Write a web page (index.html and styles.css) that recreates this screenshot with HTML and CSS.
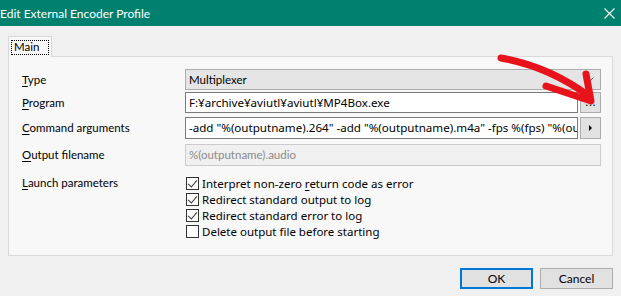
FILE: index.html
```html
<!DOCTYPE html>
<html lang="en">
<head>
    <meta charset="UTF-8">
    <title>Edit External Encoder Profile</title>
    <link rel="stylesheet" href="styles.css">
</head>
<body>
    <div class="window">
        <header class="titlebar">
            <span class="title">Edit External Encoder Profile</span>
            <svg class="close" width="11" height="11" viewBox="0 0 11 11">
                <path d="M0.5 0.5 L10.5 10.5 M10.5 0.5 L0.5 10.5" stroke="#fff" stroke-width="1.1" fill="none"/>
            </svg>
        </header>

        <div class="body">
            <div class="tabs">
                <div class="tab active"><span class="focus">Main</span></div>
            </div>

            <div class="page">
                <div class="form">
                    <label class="label"><u>T</u>ype</label>
                    <div class="combo">
                        <span>Multiplexer</span>
                        <svg class="chevron" width="8" height="5" viewBox="0 0 8 5">
                            <path d="M0.5 0.5 L4 4 L7.5 0.5" stroke="#606060" fill="none"/>
                        </svg>
                    </div>

                    <label class="label"><u>P</u>rogram</label>
                    <div class="field-row">
                        <div class="input">F:¥archive¥aviutl¥aviutl¥MP4Box.exe</div>
                        <button class="small-btn dots">...</button>
                    </div>

                    <label class="label tall"><u>C</u>ommand arguments</label>
                    <div class="field-row tall">
                        <div class="input">-add "%(outputname).264" -add "%(outputname).m4a" -fps %(fps) "%(outputname).mp4"</div>
                        <button class="small-btn">
                            <svg width="3" height="6" viewBox="0 0 3 6"><path d="M0 0 L3 3 L0 6 Z" fill="#000"/></svg>
                        </button>
                    </div>

                    <label class="label tall"><u>O</u>utput filename</label>
                    <div class="input disabled">%(outputname).audio</div>

                    <label class="label launch"><u>L</u>aunch parameters</label>
                    <div class="checks">
                        <div class="check"><span class="box on"></span><span>Interpret non-zero <u>r</u>eturn code as error</span></div>
                        <div class="check"><span class="box on"></span><span>Redirect standard output to log</span></div>
                        <div class="check"><span class="box on"></span><span>Redirect standard error to log</span></div>
                        <div class="check"><span class="box"></span><span>Delete output file before starting</span></div>
                    </div>
                </div>
            </div>

            <div class="actions">
                <button class="btn default">OK</button>
                <button class="btn">Cancel</button>
            </div>
        </div>

        <!-- hand drawn marker over the browse button -->
        <svg class="marker" width="621" height="296" viewBox="0 0 621 296">
            <path d="M501 58 Q548 66 589 96" stroke="#e8121b" stroke-width="7" stroke-linecap="round" fill="none"/>
            <path d="M586 74 L591 101 L546 86" stroke="#e8121b" stroke-width="7" stroke-linecap="round" stroke-linejoin="round" fill="none"/>
        </svg>
    </div>
</body>
</html>
```

FILE: styles.css
```css
:root {
    --title-color: #00806f;
    --window-bg: #f0f0f0;
    --page-bg: #f8f8f8;
    --page-border: #d9d9d9;
    --field-border: #7a7a7a;
    --btn-bg: #e1e1e1;
    --btn-border: #adadad;
    --accent: #0078d7;
    --text: #000000;
    --text-disabled: #8a8a8a;
}

* {
    margin: 0;
    padding: 0;
    box-sizing: border-box;
}

body {
    width: 621px;
    height: 296px;
    overflow: hidden;
    background: var(--window-bg);
    font-family: 'Lato', 'Noto Sans', sans-serif;
    font-size: 11.5px;
    color: var(--text);
}

.window {
    position: relative;
    height: 100%;
}

.titlebar {
    height: 26px;
    background: var(--title-color);
    color: #fff;
    display: flex;
    align-items: center;
    justify-content: space-between;
    padding-right: 6px;
}

.title {
    font-size: 12px;
}

.close {
    display: block;
}

.body {
    padding: 10px 8px 0 8px;
}

.tabs {
    display: flex;
    height: 21px;
    position: relative;
    z-index: 1;
}

.tab {
    width: 44px;
    height: 21px;
    border: 1px solid var(--page-border);
    border-bottom: none;
    background: var(--page-bg);
    padding: 3px 2px 1px 2px;
}

.focus {
    display: block;
    height: 15px;
    line-height: 14px;
    padding-left: 3px;
    outline: 1px dotted #000;
    outline-offset: -1px;
}

.page {
    margin-top: -1px;
    height: 200px;
    border: 1px solid var(--page-border);
    background: var(--page-bg);
    padding: 12px 11px 0 13px;
}

/* rows include the gap above each control */
.form {
    display: grid;
    grid-template-columns: 163px minmax(0, 1fr);
    grid-template-rows: 21px 23px 26px 27px auto;
}

.form > * {
    align-self: end;
}

.label {
    line-height: 21px;
}

.label.tall {
    line-height: 22px;
}

.label u,
.check u {
    text-decoration-thickness: 1px;
    text-underline-offset: 2px;
}

.combo {
    height: 21px;
    background: #e5e5e5;
    border: 1px solid #adadad;
    display: flex;
    align-items: center;
    justify-content: space-between;
    padding: 0 6px 0 3px;
}

.field-row {
    display: flex;
    gap: 2px;
    height: 21px;
    min-width: 0;
}

.field-row.tall {
    height: 22px;
}

.input {
    flex: 1;
    min-width: 0;
    height: 100%;
    background: #fff;
    border: 1px solid var(--field-border);
    padding: 0 3px;
    line-height: 19px;
    white-space: nowrap;
    overflow: hidden;
    font-family: 'Noto Sans', 'Noto Sans CJK JP', sans-serif;
    font-size: 11.6px;
}

.input.disabled {
    height: 22px;
    background: #f0f0f0;
    border-color: #cccccc;
    color: var(--text-disabled);
    line-height: 20px;
    font-family: 'Lato', 'Noto Sans', sans-serif;
    font-size: 11.5px;
}

.small-btn {
    flex: none;
    width: 21px;
    height: 100%;
    background: var(--btn-bg);
    border: 1px solid var(--btn-border);
    font-family: inherit;
    font-size: 11px;
    line-height: 1;
    display: flex;
    align-items: center;
    justify-content: center;
}

.small-btn.dots {
    align-items: flex-end;
    padding-bottom: 5px;
    letter-spacing: 1px;
    padding-left: 1px;
}

.launch {
    align-self: start;
    margin-top: 9px;
    line-height: 16px;
}

.checks {
    align-self: start;
    margin-top: 9px;
    display: flex;
    flex-direction: column;
}

.check {
    display: flex;
    align-items: center;
    gap: 3px;
    height: 16px;
    margin-left: 1px;
    font-family: 'Noto Sans', sans-serif;
    font-size: 11.5px;
}

.box {
    flex: none;
    width: 13px;
    height: 13px;
    border: 1px solid #333;
    background: #fff;
    position: relative;
}

.box.on::after {
    content: '';
    position: absolute;
    left: 3px;
    top: 0px;
    width: 4px;
    height: 8px;
    border-right: 1px solid #333;
    border-bottom: 1px solid #333;
    transform: rotate(40deg);
}

.actions {
    display: flex;
    justify-content: flex-end;
    gap: 7px;
    margin-top: 12px;
}

.btn {
    width: 73px;
    height: 21px;
    background: var(--btn-bg);
    border: 1px solid var(--btn-border);
    font-family: inherit;
    font-size: 12px;
    color: var(--text);
}

.btn.default {
    border: 2px solid var(--accent);
}

.marker {
    position: absolute;
    left: 0;
    top: 0;
    pointer-events: none;
}
```
